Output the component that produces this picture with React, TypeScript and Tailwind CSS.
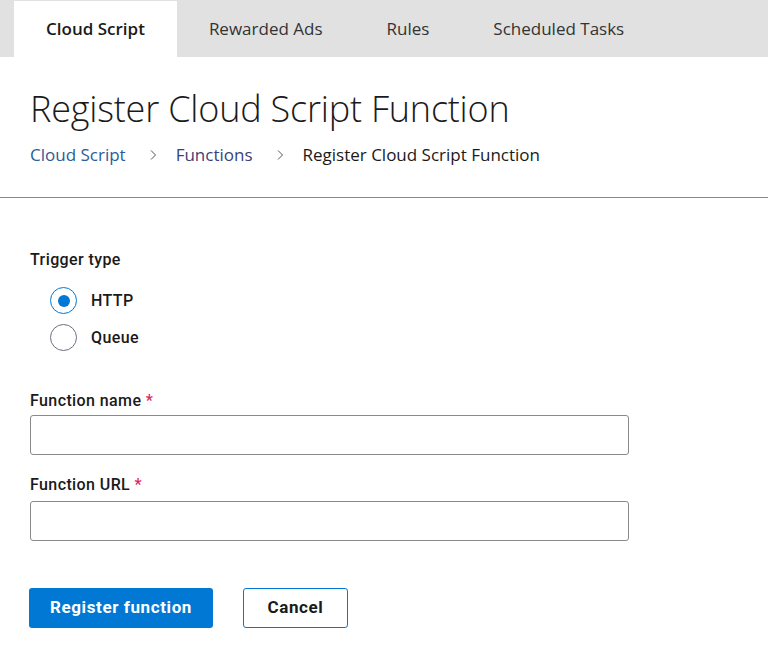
import { useState } from 'react'

const tabs = ['Cloud Script', 'Rewarded Ads', 'Rules', 'Scheduled Tasks']

export default function App() {
  const [trigger, setTrigger] = useState('HTTP')

  return (
    <div className="min-h-screen bg-white text-[#1a1a1a]" style={{ fontFamily: '"Open Sans", "Noto Sans", sans-serif' }}>
      {/* Tabs */}
      <nav className="flex h-[57px] bg-[#e1e1e1] pl-[14px] pt-[1px]">
        {tabs.map((t, i) => (
          <button
            key={t}
            className={`px-[32px] text-[17px] ${i === 0 ? 'bg-white font-semibold text-[#1a1a1a]' : 'text-[#333]'}`}
          >
            {t}
          </button>
        ))}
      </nav>

      {/* Header */}
      <header className="border-b border-[#8a8a8a] px-[30px] pt-[30px] pb-[30px]">
        <h1 className="text-[36px] font-light leading-[44px] tracking-[-0.2px]">Register Cloud Script Function</h1>
        <div className="mt-[12px] flex items-center text-[17px] leading-6">
          <a className="text-[#2c5c99]">Cloud Script</a>
          <span className="ml-[22px] mr-[18px] text-[#555]">
            <svg width="10" height="12" viewBox="0 0 10 12" fill="none">
              <path d="M3 1.5 L7.5 6 L3 10.5" stroke="currentColor" strokeWidth="1" />
            </svg>
          </span>
          <a className="text-[#3b3f7a]">Functions</a>
          <span className="ml-[22px] mr-[18px] text-[#555]">
            <svg width="10" height="12" viewBox="0 0 10 12" fill="none">
              <path d="M3 1.5 L7.5 6 L3 10.5" stroke="currentColor" strokeWidth="1" />
            </svg>
          </span>
          <span className="text-[#1a1a1a]">Register Cloud Script Function</span>
        </div>
      </header>

      {/* Form */}
      <form className="px-[30px] pt-[52px]" style={{ fontFamily: 'Roboto, "Liberation Sans", sans-serif' }}>
        <div className="text-[16px] font-medium leading-5 tracking-[0.4px]">Trigger type</div>
        <div className="mt-[17px] flex flex-col gap-[10px] pl-[20px]">
          {['HTTP', 'Queue'].map((opt) => (
            <label key={opt} className="flex items-center gap-[14px] text-[16px] font-medium tracking-[0.4px]">
              <span
                onClick={() => setTrigger(opt)}
                className={`flex h-[27px] w-[27px] items-center justify-center rounded-full border ${
                  trigger === opt ? 'border-[#0078d4]' : 'border-[#6b6f80]'
                }`}
              >
                {trigger === opt && <span className="h-[12px] w-[12px] rounded-full bg-[#0078d4]" />}
              </span>
              {opt}
            </label>
          ))}
        </div>

        <div className="mt-[40px]">
          <div className="text-[16px] font-medium leading-5 tracking-[0.4px]">
            Function name <span className="text-[#e0245e]">*</span>
          </div>
          <input className="mt-[4px] h-[40px] w-[599px] rounded-[3px] border border-[#8a8a8a] px-2 outline-none" />
        </div>

        <div className="mt-[20px]">
          <div className="text-[16px] font-medium leading-5 tracking-[0.4px]">
            Function URL <span className="text-[#e0245e]">*</span>
          </div>
          <input className="mt-[6px] h-[40px] w-[599px] rounded-[3px] border border-[#8a8a8a] px-2 outline-none" />
        </div>

        <div className="mt-[47px] flex gap-[30px]">
          <button type="button" className="h-[40px] w-[184px] -ml-px rounded-[3px] bg-[#0078d4] text-[17px] font-bold tracking-[0.6px] text-white">
            Register function
          </button>
          <button type="button" className="h-[40px] w-[105px] rounded-[3px] border border-[#0078d4] bg-white text-[17px] font-bold tracking-[0.6px] text-[#1a1a1a]">
            Cancel
          </button>
        </div>
      </form>
    </div>
  )
}
